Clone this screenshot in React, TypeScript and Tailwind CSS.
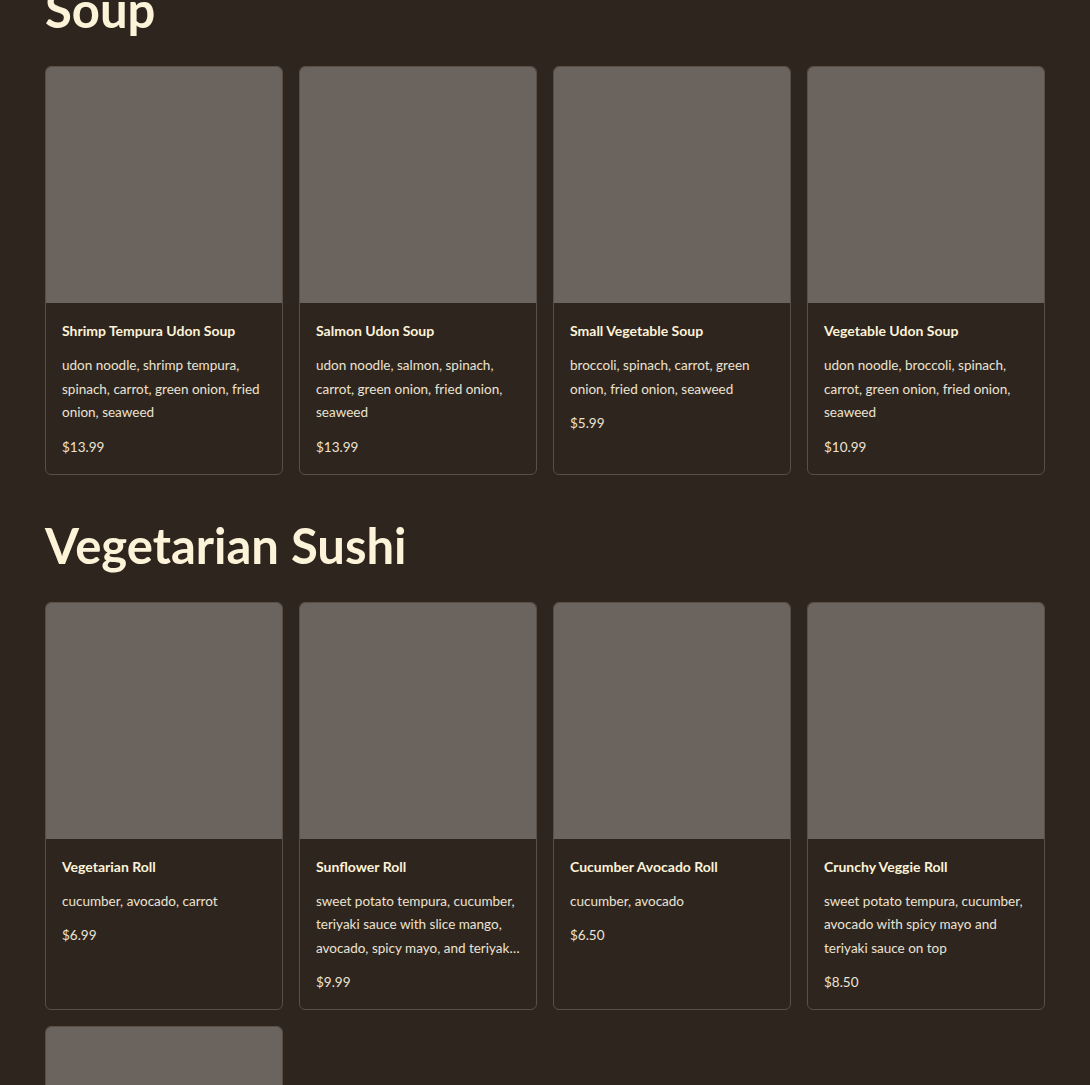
import React from "react";

type Item = { name: string; desc: string; price: string };

const soup: Item[] = [
  { name: "Shrimp Tempura Udon Soup", desc: "udon noodle, shrimp tempura, spinach, carrot, green onion, fried onion, seaweed", price: "$13.99" },
  { name: "Salmon Udon Soup", desc: "udon noodle, salmon, spinach, carrot, green onion, fried onion, seaweed", price: "$13.99" },
  { name: "Small Vegetable Soup", desc: "broccoli, spinach, carrot, green onion, fried onion, seaweed", price: "$5.99" },
  { name: "Vegetable Udon Soup", desc: "udon noodle, broccoli, spinach, carrot, green onion, fried onion, seaweed", price: "$10.99" },
];

const veg: Item[] = [
  { name: "Vegetarian Roll", desc: "cucumber, avocado, carrot", price: "$6.99" },
  { name: "Sunflower Roll", desc: "sweet potato tempura, cucumber, teriyaki sauce with slice mango, avocado, spicy mayo, and teriyaki sauce on top", price: "$9.99" },
  { name: "Cucumber Avocado Roll", desc: "cucumber, avocado", price: "$6.50" },
  { name: "Crunchy Veggie Roll", desc: "sweet potato tempura, cucumber, avocado with spicy mayo and teriyaki sauce on top", price: "$8.50" },
  { name: "Avocado Roll", desc: "avocado", price: "$5.99" },
];

function Card({ item }: { item: Item }) {
  return (
    <div className="flex flex-col overflow-hidden rounded-[6px] border border-[#5a4f47] bg-[#2f251f]">
      <div className="aspect-square w-full bg-[#6b635d]" />
      <div className="flex flex-col px-4 pt-[17px] pb-4">
        <div className="text-[14px] font-bold leading-[22px] text-[#fcf3d8]">{item.name}</div>
        <p className="mt-[12px] line-clamp-3 text-[13.5px] leading-[23.5px] text-[#ebe3d2]">{item.desc}</p>
        <div className="mt-[11px] text-[13.5px] leading-[22px] text-[#ebe3d2]">{item.price}</div>
      </div>
    </div>
  );
}

function Section({ title, items, className }: { title: string; items: Item[]; className?: string }) {
  return (
    <section className={className}>
      <h2 className="mb-[33px] text-[49px] font-bold leading-[48px] text-[#fcf3d8]">{title}</h2>
      <div className="grid grid-cols-4 gap-4">
        {items.map((it) => (
          <Card key={it.name} item={it} />
        ))}
      </div>
    </section>
  );
}

export default function App() {
  return (
    <div
      className="min-h-screen bg-[#2f251f] px-[45px]"
      style={{ fontFamily: "Lato, 'Noto Sans', sans-serif" }}
    >
      <div className="-mt-[15px] pb-10">
        <Section title="Soup" items={soup} />
        <Section title="Vegetarian Sushi" items={veg} className="mt-[46px]" />
      </div>
    </div>
  );
}
